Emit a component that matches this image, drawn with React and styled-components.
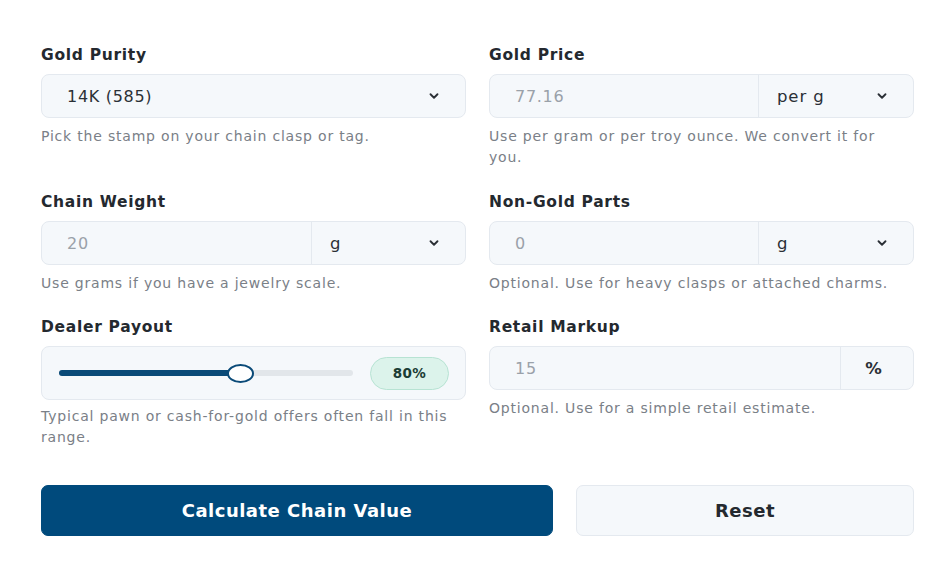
import React from 'react'
import styled, { createGlobalStyle } from 'styled-components'

const GlobalStyle = createGlobalStyle`
  * { box-sizing: border-box; }
  body {
    margin: 0;
    background: #ffffff;
    font-family: 'DejaVu Sans', 'Open Sans', sans-serif;
    color: #1f2328;
  }
`

const Page = styled.div`
  width: 949px;
  height: 575px;
  padding: 45px 35px 0 41px;
`

const Grid = styled.div`
  display: grid;
  grid-template-columns: 425px 425px;
  column-gap: 23px;
`

const Field = styled.div`
  display: flex;
  flex-direction: column;
  min-height: ${(p) => p.$min || 0}px;
`

const Label = styled.div`
  font-size: 15.5px;
  font-weight: 700;
  color: #24292f;
  line-height: 20px;
  height: 20px;
  margin-bottom: 9px;
  letter-spacing: 0.7px;
`

const Box = styled.div`
  display: flex;
  align-items: stretch;
  height: ${(p) => p.$h || 44}px;
  background: #f5f8fb;
  border: 1px solid #e4e9ef;
  border-radius: 8px;
  overflow: hidden;
`

const Value = styled.div`
  flex: 1;
  display: flex;
  align-items: center;
  padding-left: 25px;
  font-size: 16px;
  letter-spacing: 0.7px;
  color: ${(p) => (p.$strong ? '#2b3036' : '#9aa1a9')};
`

const Suffix = styled.div`
  width: ${(p) => p.$w}px;
  display: flex;
  align-items: center;
  justify-content: ${(p) => (p.$center ? 'center' : 'space-between')};
  padding: 0 24px 0 18px;
  border-left: 1px solid ${(p) => (p.$plain ? 'transparent' : '#e4e9ef')};
  font-size: 16.5px;
  letter-spacing: 0.9px;
  font-weight: ${(p) => (p.$bold ? 700 : 400)};
  color: #2b3036;
`

const Chevron = styled.svg`
  width: 14px;
  height: 14px;
  flex-shrink: 0;
`

const Help = styled.div`
  margin-top: ${(p) => p.$mt || 8}px;
  max-width: ${(p) => p.$max || 425}px;
  font-size: 14px;
  letter-spacing: 0.8px;
  line-height: 21px;
  color: #7a8087;
`

const SliderBox = styled(Box)`
  align-items: center;
  padding: 0 16px 0 17px;
  gap: 17px;
`

const Track = styled.div`
  position: relative;
  flex: 1;
  height: 6px;
  border-radius: 3px;
  background: #e2e6ea;
`

const Fill = styled.div`
  height: 100%;
  border-radius: 3px;
  background: #0a4a78;
`

const Thumb = styled.div`
  position: absolute;
  top: 50%;
  width: 27px;
  height: 19px;
  margin-left: -14px;
  margin-top: -9.5px;
  border-radius: 50%;
  background: #ffffff;
  border: 2px solid #0a4a78;
`

const Badge = styled.div`
  width: 79px;
  height: 33px;
  border-radius: 17px;
  display: flex;
  align-items: center;
  justify-content: center;
  background: #dcf3eb;
  border: 1px solid #b7e3d3;
  color: #1b3d35;
  font-size: 13.5px;
  letter-spacing: 0.4px;
  font-weight: 700;
`

const Actions = styled.div`
  display: grid;
  grid-template-columns: 512px 1fr;
  column-gap: 23px;
  margin-top: 37px;
`

const Button = styled.button`
  height: 51px;
  border-radius: 7px;
  font-family: inherit;
  font-size: 18px;
  letter-spacing: 0.5px;
  font-weight: 700;
  cursor: pointer;
  background: ${(p) => (p.$primary ? '#004a7c' : '#f5f8fb')};
  color: ${(p) => (p.$primary ? '#ffffff' : '#24292f')};
  border: 1px solid ${(p) => (p.$primary ? '#004a7c' : '#e4e9ef')};
`

const Down = () => (
  <Chevron viewBox="0 0 24 24" fill="none" stroke="#2b3036" strokeWidth="3.2" strokeLinecap="round" strokeLinejoin="round">
    <path d="M6 9l6 6 6-6" />
  </Chevron>
)

const payout = 0.62

export default function App() {
  return (
    <>
      <GlobalStyle />
      <Page>
        <Grid>
          <Field $min={147}>
            <Label>Gold Purity</Label>
            <Box>
              <Value $strong>14K (585)</Value>
              <Suffix $w={80} $plain>
                <span />
                <Down />
              </Suffix>
            </Box>
            <Help>Pick the stamp on your chain clasp or tag.</Help>
          </Field>
          <Field $min={147}>
            <Label>Gold Price</Label>
            <Box>
              <Value>77.16</Value>
              <Suffix $w={155}>
                <span>per g</span>
                <Down />
              </Suffix>
            </Box>
            <Help $max={400}>Use per gram or per troy ounce. We convert it for you.</Help>
          </Field>

          <Field $min={125}>
            <Label>Chain Weight</Label>
            <Box>
              <Value>20</Value>
              <Suffix $w={154}>
                <span>g</span>
                <Down />
              </Suffix>
            </Box>
            <Help>Use grams if you have a jewelry scale.</Help>
          </Field>
          <Field $min={125}>
            <Label>Non-Gold Parts</Label>
            <Box>
              <Value>0</Value>
              <Suffix $w={155}>
                <span>g</span>
                <Down />
              </Suffix>
            </Box>
            <Help>Optional. Use for heavy clasps or attached charms.</Help>
          </Field>

          <Field>
            <Label>Dealer Payout</Label>
            <SliderBox $h={54}>
              <Track>
                <Fill style={{ width: `${payout * 100}%` }} />
                <Thumb style={{ left: `${payout * 100}%` }} />
              </Track>
              <Badge>80%</Badge>
            </SliderBox>
            <Help $mt={6}>Typical pawn or cash-for-gold offers often fall in this range.</Help>
          </Field>
          <Field>
            <Label>Retail Markup</Label>
            <Box>
              <Value>15</Value>
              <Suffix $w={73} $center $bold>
                %
              </Suffix>
            </Box>
            <Help>Optional. Use for a simple retail estimate.</Help>
          </Field>
        </Grid>
        <Actions>
          <Button $primary>Calculate Chain Value</Button>
          <Button>Reset</Button>
        </Actions>
      </Page>
    </>
  )
}
